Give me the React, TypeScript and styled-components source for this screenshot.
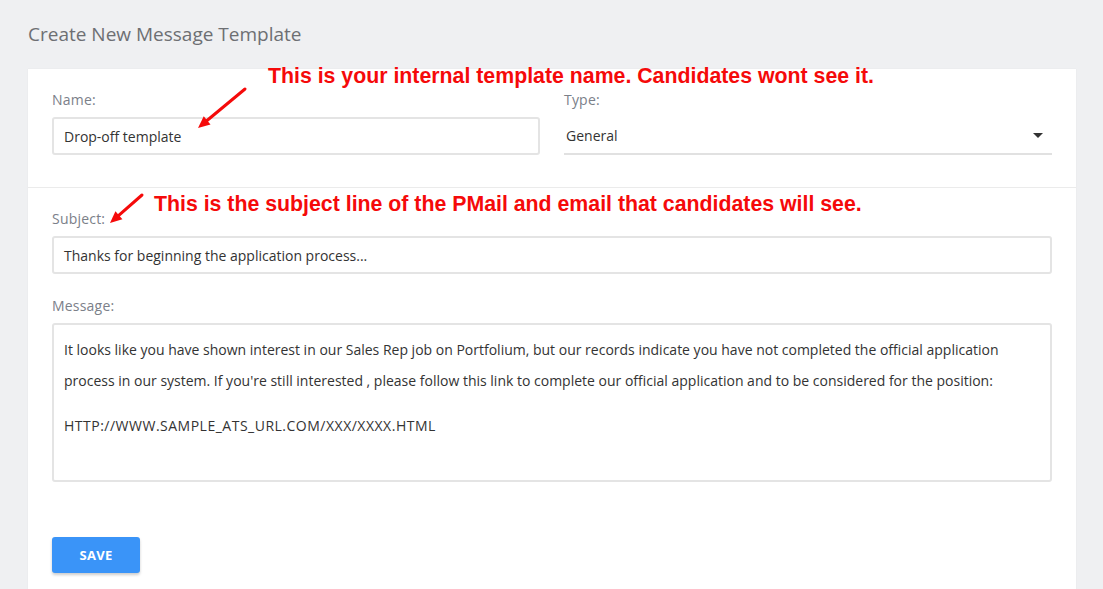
import React from 'react';
import styled, { createGlobalStyle } from 'styled-components';

const GlobalStyle = createGlobalStyle`
  html, body {
    margin: 0;
    padding: 0;
    background: #eff0f2;
    font-family: 'Open Sans', 'Lato', sans-serif;
    overflow: hidden;
  }
`;

const Page = styled.div`
  width: 1103px;
  height: 589px;
  box-sizing: border-box;
  padding: 22px 27px 0 28px;
  position: relative;
`;

const PageTitle = styled.h1`
  margin: 0 0 23px;
  font-size: 19px;
  font-weight: 400;
  line-height: 24px;
  color: #6d6f73;
`;

const Card = styled.div`
  background: #ffffff;
  box-shadow: 0 0 1px rgba(0, 0, 0, 0.08);
  height: 520px;
`;

const Section = styled.div<{ $divider?: boolean }>`
  padding: ${({ $divider }) => ($divider ? '23px 24px 32px' : '23px 24px 0')};
  border-bottom: ${({ $divider }) => ($divider ? '1px solid #ebebeb' : 'none')};
`;

const Row = styled.div`
  display: grid;
  grid-template-columns: 1fr 1fr;
  column-gap: 24px;
`;

const Field = styled.div<{ $gap?: number }>`
  display: flex;
  flex-direction: column;
  margin-bottom: ${({ $gap }) => $gap ?? 0}px;
`;

const Label = styled.label`
  font-size: 14px;
  line-height: 16px;
  letter-spacing: 0.2px;
  color: #7b8089;
  margin-bottom: 9px;
`;

const Input = styled.div`
  height: 38px;
  box-sizing: border-box;
  border: 2px solid #e4e4e4;
  border-radius: 3px;
  padding: 0 10px;
  display: flex;
  align-items: center;
  font-size: 14px;
  color: #333;
`;

const Select = styled.div`
  height: 38px;
  box-sizing: border-box;
  border-bottom: 2px solid #e1e1e1;
  padding: 0 9px 0 2px;
  display: flex;
  align-items: center;
  justify-content: space-between;
  font-size: 14px;
  color: #333;
`;

const Caret = styled.span`
  width: 0;
  height: 0;
  border-left: 5px solid transparent;
  border-right: 5px solid transparent;
  border-top: 5px solid #333;
`;

const TextArea = styled.div`
  height: 159px;
  box-sizing: border-box;
  border: 2px solid #e4e4e4;
  border-radius: 3px;
  padding: 9px 10px;
  font-size: 14px;
  color: #333;
`;

const Para = styled.p<{ $top?: number; $spacing?: number }>`
  margin: ${({ $top }) => $top ?? 0}px 0 0;
  line-height: 31px;
  letter-spacing: ${({ $spacing }) => $spacing ?? 0}px;
`;

const SaveButton = styled.button`
  margin-top: 55px;
  width: 88px;
  height: 36px;
  border: none;
  border-radius: 3px;
  background: #3a94f8;
  color: #fff;
  font-family: inherit;
  font-size: 13px;
  font-weight: 700;
  letter-spacing: 0.3px;
  box-shadow: 0 2px 3px rgba(0, 0, 0, 0.2);
`;

const Note = styled.div<{ $x: number; $y: number }>`
  position: absolute;
  left: ${({ $x }) => $x}px;
  top: ${({ $y }) => $y}px;
  font-family: 'Liberation Sans', Arial, sans-serif;
  font-weight: 700;
  font-size: 21.3px;
  color: #f50a0a;
  white-space: nowrap;
  line-height: 24px;
`;

const ArrowSvg = styled.svg`
  position: absolute;
  left: 0;
  top: 0;
  pointer-events: none;
`;

const Arrow = ({ x1, y1, x2, y2 }: { x1: number; y1: number; x2: number; y2: number }) => {
  const ang = Math.atan2(y2 - y1, x2 - x1);
  const len = 13;
  const spread = 0.42;
  const ax = x2 - len * Math.cos(ang - spread);
  const ay = y2 - len * Math.sin(ang - spread);
  const bx = x2 - len * Math.cos(ang + spread);
  const by = y2 - len * Math.sin(ang + spread);
  const sx = x2 - 9 * Math.cos(ang);
  const sy = y2 - 9 * Math.sin(ang);
  return (
    <g>
      <line x1={x1} y1={y1} x2={sx} y2={sy} stroke="#f50a0a" strokeWidth={3} strokeLinecap="round" />
      <polygon points={`${x2},${y2} ${ax},${ay} ${bx},${by}`} fill="#f50a0a" />
    </g>
  );
};

export default function App() {
  return (
    <>
      <GlobalStyle />
      <Page>
        <PageTitle>Create New Message Template</PageTitle>
        <Card>
          <Section $divider>
            <Row>
              <Field>
                <Label>Name:</Label>
                <Input>Drop-off template</Input>
              </Field>
              <Field>
                <Label>Type:</Label>
                <Select>
                  General
                  <Caret />
                </Select>
              </Field>
            </Row>
          </Section>
          <Section>
            <Field $gap={24}>
              <Label>Subject:</Label>
              <Input>Thanks for beginning the application process...</Input>
            </Field>
            <Field>
              <Label>Message:</Label>
              <TextArea>
                <Para>
                  It looks like you have shown interest in our Sales Rep job on Portfolium, but our records indicate you have not completed the official application process in our system. If you're still interested , please follow this link to complete our official application and to be considered for the position:
                </Para>
                <Para $top={14} $spacing={0.5}>HTTP://WWW.SAMPLE_ATS_URL.COM/XXX/XXXX.HTML</Para>
              </TextArea>
            </Field>
            <SaveButton>SAVE</SaveButton>
          </Section>
        </Card>
        <Note $x={268} $y={64}>This is your internal template name. Candidates wont see it.</Note>
        <Note $x={154} $y={192}>This is the subject line of the PMail and email that candidates will see.</Note>
        <ArrowSvg width={1103} height={589}>
          <Arrow x1={245} y1={89} x2={198} y2={128} />
          <Arrow x1={142} y1={195} x2={110} y2={223} />
        </ArrowSvg>
      </Page>
    </>
  );
}
